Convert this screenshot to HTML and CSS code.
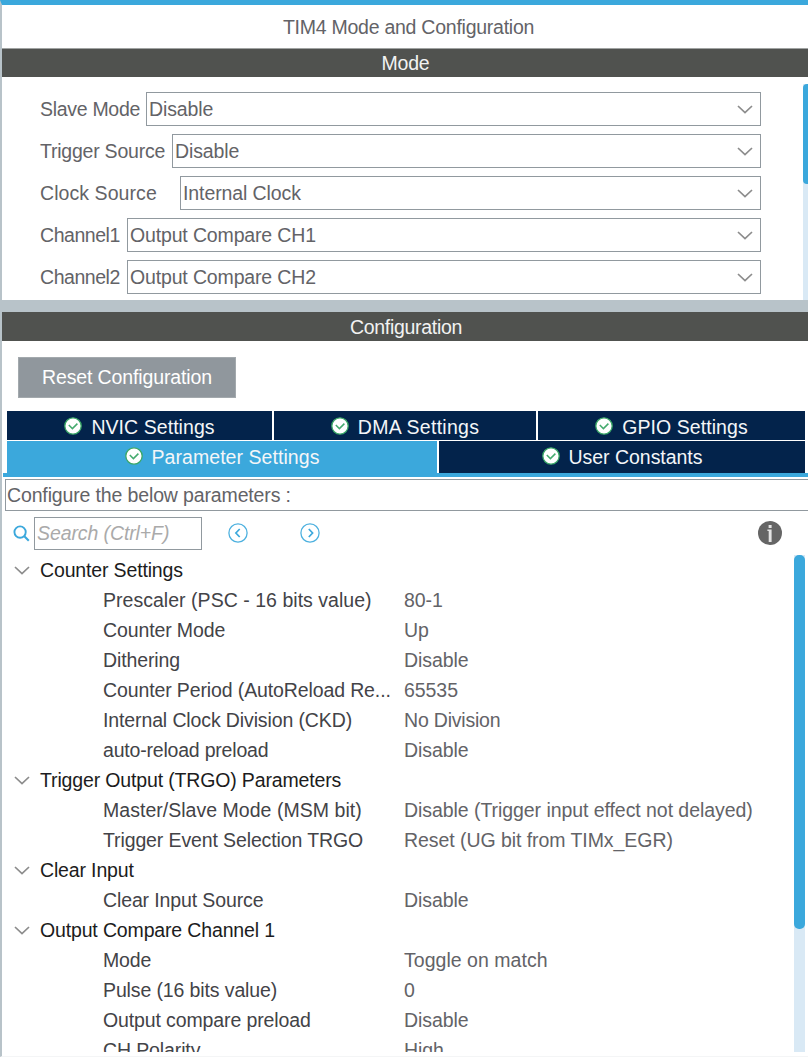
FILE: index.html
```
<!DOCTYPE html>
<html lang="en">
<head>
<meta charset="utf-8">
<title>TIM4 Mode and Configuration</title>
<link rel="stylesheet" href="styles.css">
</head>
<body>
<svg class="defs" width="0" height="0">
  <symbol id="chev" viewBox="0 0 16 9"><path d="M1 1 L8 7.5 L15 1" fill="none" stroke="#8c8c8c" stroke-width="1.7"/></symbol>
  <symbol id="check" viewBox="0 0 18 18"><circle cx="9" cy="9" r="8.2" fill="#fff" stroke="#3aa767" stroke-width="1.3"/><path d="M4.8 8 L8.4 11.6 L13.4 6.6" fill="none" stroke="#45ab6e" stroke-width="1.5"/></symbol>
</svg>
<div class="panel">
  <header class="title">TIM4 Mode and Configuration</header>
  <h2 class="bar bar-mode">Mode</h2>
  <section class="mode">
    <div class="fields">
      <div class="field"><label class="slave">Slave Mode</label><div class="select"><span>Disable</span><svg class="chev"><use href="#chev"/></svg></div></div>
      <div class="field"><label class="trigger">Trigger Source</label><div class="select"><span>Disable</span><svg class="chev"><use href="#chev"/></svg></div></div>
      <div class="field"><label class="clock">Clock Source</label><div class="select"><span>Internal Clock</span><svg class="chev"><use href="#chev"/></svg></div></div>
      <div class="field"><label class="channel">Channel1</label><div class="select"><span>Output Compare CH1</span><svg class="chev"><use href="#chev"/></svg></div></div>
      <div class="field"><label class="channel">Channel2</label><div class="select"><span>Output Compare CH2</span><svg class="chev"><use href="#chev"/></svg></div></div>
    </div>
    <div class="track mode-track"><div class="thumb"></div></div>
  </section>
  <div class="splitter"></div>
  <h2 class="bar bar-config">Configuration</h2>
  <button class="reset">Reset Configuration</button>
  <nav class="tabs">
    <div class="tabrow first">
      <div class="tab nvic"><svg class="check"><use href="#check"/></svg><span>NVIC Settings</span></div>
      <div class="tab dma"><svg class="check"><use href="#check"/></svg><span>DMA Settings</span></div>
      <div class="tab gpio"><svg class="check"><use href="#check"/></svg><span>GPIO Settings</span></div>
    </div>
    <div class="tabrow second">
      <div class="tab param active"><svg class="check"><use href="#check"/></svg><span>Parameter Settings</span></div>
      <div class="tab user"><svg class="check"><use href="#check"/></svg><span>User Constants</span></div>
    </div>
  </nav>
  <div class="hint">Configure the below parameters :</div>
  <div class="tools">
    <svg class="mag" viewBox="0 0 18 18"><circle cx="7.5" cy="7.5" r="6" fill="none" stroke="#3ba8dc" stroke-width="2"/><path d="M12 12 L16.7 16.7" stroke="#3ba8dc" stroke-width="2.2"/></svg>
    <div class="search">Search (Ctrl+F)</div>
    <svg class="prev" viewBox="0 0 20 20"><circle cx="10" cy="10" r="9.1" fill="none" stroke="#4eb1df" stroke-width="1.3"/><path d="M11.7 6 L7.9 10 L11.7 14" fill="none" stroke="#3ba8dc" stroke-width="1.7"/></svg>
    <svg class="next" viewBox="0 0 20 20"><circle cx="10" cy="10" r="9.1" fill="none" stroke="#4eb1df" stroke-width="1.3"/><path d="M8.8 6 L12.6 10 L8.8 14" fill="none" stroke="#3ba8dc" stroke-width="1.7"/></svg>
    <svg class="info" viewBox="0 0 24 24"><circle cx="12" cy="12" r="12" fill="#656565"/><rect x="10.6" y="4" width="3" height="3" fill="#e4e4e4"/><path d="M9.4 8.6 H13.6 V21 H10.7 V10 H9.4 Z" fill="#e4e4e4"/></svg>
  </div>
  <section class="params">
    <div class="rows">
      <div class="group"><svg class="chev"><use href="#chev"/></svg><span>Counter Settings</span></div>
      <div class="row"><span class="wide">Prescaler (PSC - 16 bits value)</span><span>80-1</span></div>
      <div class="row"><span>Counter Mode</span><span>Up</span></div>
      <div class="row"><span>Dithering</span><span>Disable</span></div>
      <div class="row"><span>Counter Period (AutoReload Re...</span><span>65535</span></div>
      <div class="row"><span>Internal Clock Division (CKD)</span><span class="tight">No Division</span></div>
      <div class="row"><span class="tight">auto-reload preload</span><span>Disable</span></div>
      <div class="group"><svg class="chev"><use href="#chev"/></svg><span>Trigger Output (TRGO) Parameters</span></div>
      <div class="row"><span class="wide">Master/Slave Mode (MSM bit)</span><span>Disable (Trigger input effect not delayed)</span></div>
      <div class="row"><span>Trigger Event Selection TRGO</span><span>Reset (UG bit from TIMx_EGR)</span></div>
      <div class="group"><svg class="chev"><use href="#chev"/></svg><span>Clear Input</span></div>
      <div class="row"><span>Clear Input Source</span><span>Disable</span></div>
      <div class="group"><svg class="chev"><use href="#chev"/></svg><span>Output Compare Channel 1</span></div>
      <div class="row"><span>Mode</span><span class="wide">Toggle on match</span></div>
      <div class="row"><span>Pulse (16 bits value)</span><span>0</span></div>
      <div class="row"><span>Output compare preload</span><span>Disable</span></div>
      <div class="row"><span>CH Polarity</span><span>High</span></div>
    </div>
    <div class="track"><div class="thumb"></div></div>
  </section>
</div>
</body>
</html>
```

FILE: styles.css
```
* { box-sizing: border-box; }
body {
  margin: 0;
  background: #fff;
  font-family: "Liberation Sans", Arial, sans-serif;
  font-size: 19.5px;
  letter-spacing: -0.1px;
  color: #636367;
  white-space: nowrap;
}
.defs { display: block; height: 0; }
.panel {
  width: 808px;
  height: 1057px;
  overflow: hidden;
  border-top: 5px solid #3ba8dc;
  border-left: 2px solid #b8c3c9;
  border-bottom: 1px solid #f4f5f6;
}
.title {
  height: 43px;
  line-height: 44px;
  padding-left: 7px;
  text-align: center;
  letter-spacing: -0.25px;
}
.bar {
  margin: 0;
  height: 29px;
  line-height: 28px;
  background: #50524f;
  color: #f2f2f2;
  font-size: 19.5px;
  font-weight: 400;
  text-align: center;
}
.bar-mode { border-top: 1px solid #a0a3a2; padding-left: 1px; letter-spacing: -0.2px; }
.bar-config { letter-spacing: -0.3px; line-height: 30px; padding-left: 2px; }

.mode { display: flex; justify-content: space-between; height: 223px; }
.fields { width: 759px; padding: 15px 0 0 38px; display: flex; flex-direction: column; gap: 8px; }
.field { display: flex; height: 34px; }
.field label { line-height: 34px; flex: none; }
.slave { width: 106px; letter-spacing: -0.3px; }
.trigger { width: 132px; letter-spacing: -0.23px; }
.clock { width: 140px; letter-spacing: 0.07px; }
.channel { width: 87px; letter-spacing: -0.45px; }
.channel + .select { letter-spacing: -0.15px; }
.select {
  flex: 1;
  display: flex;
  justify-content: space-between;
  align-items: center;
  border: 1px solid #91999f;
  padding: 0 7px 0 2px;
  line-height: 32px;
}
.chev { width: 16px; height: 9px; flex: none; }
.track { background: #d9e9f5; }
.thumb { background: #3ba8dc; border-radius: 4px; }
.mode-track { width: 5px; margin-top: 7px; }
.mode-track .thumb { height: 100px; border-radius: 4px 0 0 4px; }

.splitter { height: 12px; background: #b8c3c9; }

.reset {
  display: block;
  margin: 16px 0 13px 16px;
  width: 218px;
  height: 41px;
  border: 1px solid #a3a9ad;
  padding: 0;
  background: #90979d;
  color: #fff;
  font: inherit;
  letter-spacing: -0.13px;
}

.tabs { margin-left: 1px; padding-left: 4px; border-bottom: 4px solid #3ba8dc; }
.tabrow { display: flex; width: 798px; gap: 2px; }
.first { height: 29px; margin-bottom: 1px; }
.second { height: 32px; }
.tab {
  display: flex;
  align-items: center;
  justify-content: center;
  gap: 9px;
  background: #03234b;
  color: #f4f6f8;
  letter-spacing: 0.06px;
}
.tab span { padding-top: 3px; }
.check { width: 18px; height: 18px; flex: none; }
.nvic { width: 265px; }
.dma { width: 262px; letter-spacing: 0.27px; }
.gpio { width: 267px; }
.param { width: 430px; }
.user { width: 366px; letter-spacing: -0.03px; }
.second .tab { padding-bottom: 2px; }
.active { background: #3ba8dc; }

.hint {
  margin: 2px 0 0 3px;
  height: 32px;
  line-height: 30px;
  border: 1px solid #91999f;
  border-right: 0;
  padding-left: 1px;
  letter-spacing: -0.14px;
}
.tools { display: flex; align-items: center; height: 44px; padding-left: 11px; }
.mag { width: 17px; height: 17px; }
.search {
  margin-left: 4px;
  width: 168px;
  height: 33px;
  line-height: 31px;
  border: 1px solid #91999f;
  padding-left: 2px;
  color: #aaa;
  font-style: italic;
}
.prev, .next { width: 20px; height: 20px; }
.prev { margin-left: 26px; }
.next { margin-left: 52px; }
.info { width: 24px; height: 24px; margin-left: auto; margin-right: 26px; }

.params { display: flex; justify-content: space-between; height: 497px; padding-right: 3px; }
.rows { height: 497px; overflow: hidden; }
.group { display: flex; align-items: center; height: 30px; padding-left: 12px; gap: 10px; color: #1c1c20; letter-spacing: -0.15px; }
.row {
  display: grid;
  grid-template-columns: 301px 380px;
  height: 30px;
  line-height: 30px;
  padding-left: 101px;
  letter-spacing: -0.06px;
}
.row span:first-child { color: #434347; letter-spacing: -0.12px; }
.row span.wide { letter-spacing: 0.03px; }
.row span.tight { letter-spacing: -0.2px; }
.params .track { width: 11px; }
.params .thumb { height: 374px; border-radius: 5px; }
```
